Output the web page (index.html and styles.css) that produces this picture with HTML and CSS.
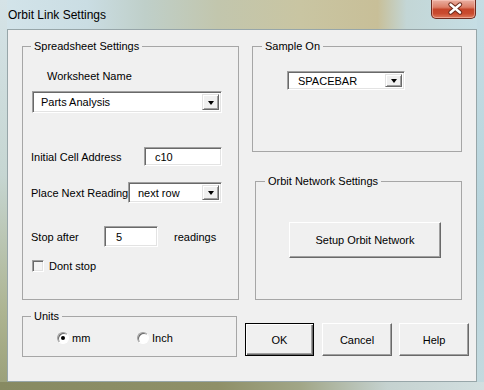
FILE: index.html
```html
<!DOCTYPE html>
<html lang="en">
  <head>
    <meta charset="UTF-8" />
    <title>Orbit Link Settings</title>
    <link rel="stylesheet" href="styles.css">
  </head>
  <body>
    <div class="window">
      <div class="titlebar">
        <span class="title">Orbit Link Settings</span>
        <button class="close" title="Close">
          <svg width="45" height="19" viewBox="0 0 45 19">
            <path d="M19.5 5.5 L29 13.5 M29 5.5 L19.5 13.5" stroke="#6b2a1c" stroke-width="4.4" stroke-linecap="round" fill="none" />
            <path d="M19.5 5.5 L29 13.5 M29 5.5 L19.5 13.5" stroke="#fff" stroke-width="2.4" stroke-linecap="round" fill="none" />
          </svg>
        </button>
      </div>

      <div class="client">
        <div class="col-left">
          <fieldset class="group sheet">
            <legend>Spreadsheet Settings</legend>
            <div class="caption">Worksheet Name</div>
            <div class="combo combo-sheet">
              <span class="combo-text">Parts Analysis</span>
              <span class="drop"><i></i></span>
            </div>

            <div class="field field-cell">
              <label class="lbl lbl-cell">Initial Cell Address</label>
              <div class="textbox tb-cell">c10</div>
            </div>

            <div class="field field-place">
              <label class="lbl lbl-place">Place Next Reading</label>
              <div class="combo combo-place">
                <span class="combo-text">next row</span>
                <span class="drop"><i></i></span>
              </div>
            </div>

            <div class="field field-stop">
              <label class="lbl lbl-stop">Stop after</label>
              <div class="textbox tb-stop">5</div>
              <span class="suffix">readings</span>
            </div>

            <div class="check-row">
              <span class="checkbox"></span>
              <span>Dont stop</span>
            </div>
          </fieldset>

          <fieldset class="group units">
            <legend>Units</legend>
            <div class="radio-row">
              <span class="option option-mm"><span class="radio checked"></span>mm</span>
              <span class="option"><span class="radio"></span>Inch</span>
            </div>
          </fieldset>
        </div>

        <div class="col-right">
          <fieldset class="group sample">
            <legend>Sample On</legend>
            <div class="combo combo-sample">
              <span class="combo-text">SPACEBAR</span>
              <span class="drop"><i></i></span>
            </div>
          </fieldset>

          <fieldset class="group network">
            <legend>Orbit Network Settings</legend>
            <button class="btn btn-setup">Setup Orbit Network</button>
          </fieldset>

          <div class="actions">
            <button class="btn btn-default">OK</button>
            <button class="btn">Cancel</button>
            <button class="btn">Help</button>
          </div>
        </div>
      </div>

      <div class="frame-bottom"></div>
    </div>
  </body>
</html>
```

FILE: styles.css
```css
body {
  margin: 0;
  font-family: "Liberation Sans", Arial, sans-serif;
  font-size: 11px;
  color: #000;
  background: #fff;
}
.window {
  width: 484px;
  height: 390px;
  display: flex;
  flex-direction: column;
  background:
    linear-gradient(180deg, #d5e3e7 0%, #c6d6d2 45%, #adb491 80%, #9a9f78 100%) left top / 7px 100% no-repeat,
    linear-gradient(180deg, #c5dde4 0%, #b7d4dc 60%, #c4dadf 100%) right top / 7px 100% no-repeat,
    linear-gradient(90deg, #d3e4ea 0%, #cadde3 18%, #bfcfc9 30%, #c2c6ad 45%, #c9c5a2 62%, #c8bf98 78%, #c3d6d6 84%, #c6dfe6 100%);
}
.titlebar {
  height: 29px;
  display: flex;
  align-items: flex-start;
}
.title {
  padding-left: 8px;
  line-height: 30px;
  font-size: 12px;
  color: #000;
}
.close {
  margin-left: auto;
  margin-right: 8px;
  width: 45px;
  height: 19px;
  padding: 0;
  border: 1px solid #6f2c20;
  border-top: none;
  border-radius: 0 0 5px 5px;
  background: linear-gradient(180deg, #eab0a2 0%, #dc7f68 40%, #c5452a 52%, #c94b2f 75%, #dd7a5c 100%);
  box-shadow: inset 0 0 0 1px rgba(255, 210, 200, 0.5);
}
.close svg {
  display: block;
  margin: -1px 0 0 -1px;
}
.client {
  margin: 0 7px;
  height: 353px;
  box-sizing: border-box;
  border: 1px solid #97a6a9;
  background: #f0f0f0;
  display: flex;
  padding: 9px 0 0 14px;
}
.frame-bottom {
  height: 8px;
  background: linear-gradient(90deg, #878a62 0%, #8f9068 45%, #a1a687 62%, #c5d2d0 80%, #d2dfe0 100%);
}

/* group boxes */
.group {
  margin: 0;
  padding: 0;
  box-sizing: border-box;
  border: 1px solid #a6a6a6;
  min-width: 0;
}
.group legend {
  padding: 0 3px;
  margin-left: 8px;
  line-height: 14px;
  height: 14px;
}
.col-left {
  width: 217px;
}
.col-right {
  margin-left: 6px;
  width: 224px;
}
.sheet {
  width: 217px;
  height: 261px;
}
.units {
  margin-top: 9px;
  width: 215px;
  height: 48px;
}
.sample {
  margin-left: 7px;
  width: 210px;
  height: 113px;
}
.sample legend,
.network legend {
  margin-left: 9px;
}
.network {
  margin: 22px 0 0 10px;
  width: 207px;
  height: 126px;
}

/* spreadsheet rows */
.caption {
  margin: 16px 0 0 24px;
  height: 14px;
  line-height: 14px;
}
.field {
  display: flex;
  align-items: center;
  margin-left: 8px;
}
.field-cell {
  margin-top: 34px;
  height: 19px;
}
.field-place {
  margin-top: 16px;
  height: 21px;
}
.field-stop {
  margin-top: 23px;
  height: 21px;
}
.lbl {
  white-space: nowrap;
  flex-shrink: 0;
}
.lbl-cell {
  width: 113px;
}
.lbl-place {
  width: 97px;
}
.lbl-stop {
  width: 73px;
}
.suffix {
  margin-left: 16px;
}
.textbox,
.combo {
  box-sizing: border-box;
  flex-shrink: 0;
  height: 100%;
  background: #fff;
  border-top: 1px solid #a0a0a0;
  border-left: 1px solid #a0a0a0;
  border-right: 1px solid #fff;
  border-bottom: 1px solid #fff;
  box-shadow: inset 1px 1px 0 #696969, inset -1px -1px 0 #e3e3e3;
  display: flex;
  align-items: center;
}
.textbox {
  padding-left: 10px;
}
.tb-cell {
  width: 78px;
}
.tb-stop {
  width: 54px;
  padding-left: 11px;
}
.combo-text {
  flex: 1;
  padding-left: 8px;
  white-space: nowrap;
}
.drop {
  width: 17px;
  height: calc(100% - 4px);
  margin-right: 2px;
  box-sizing: border-box;
  background: #f0f0f0;
  border-top: 1px solid #e3e3e3;
  border-left: 1px solid #e3e3e3;
  border-right: 1px solid #696969;
  border-bottom: 1px solid #696969;
  box-shadow: inset 1px 1px 0 #fff, inset -1px -1px 0 #a0a0a0;
  display: flex;
  align-items: center;
  justify-content: center;
}
.drop i {
  width: 0;
  height: 0;
  border-top: 4px solid #000;
  border-left: 3.5px solid transparent;
  border-right: 3.5px solid transparent;
  margin-top: 1px;
}
.combo-sheet {
  margin: 8px 0 0 9px;
  width: 190px;
  height: 22px;
}
.combo-place {
  width: 94px;
}
.combo-place .combo-text {
  padding-left: 9px;
}
.combo-sample {
  margin: 18px 0 0 34px;
  width: 118px;
  height: 19px;
}
.combo-sample .combo-text {
  padding-left: 10px;
}
.check-row {
  margin: 12px 0 0 9px;
  height: 13px;
  display: flex;
  align-items: center;
  gap: 5px;
}
.checkbox {
  width: 12px;
  height: 12px;
  box-sizing: border-box;
  background: #f4f4f4;
  border-top: 1px solid #a0a0a0;
  border-left: 1px solid #a0a0a0;
  border-right: 1px solid #fff;
  border-bottom: 1px solid #fff;
  box-shadow: inset 1px 1px 0 #696969, inset -1px -1px 0 #e3e3e3;
}

/* units */
.radio-row {
  margin: 8px 0 0 34px;
  height: 13px;
  display: flex;
  align-items: center;
}
.option {
  display: flex;
  align-items: center;
  gap: 3px;
}
.option-mm {
  width: 80px;
}
.radio {
  width: 12px;
  height: 12px;
  box-sizing: border-box;
  border-radius: 50%;
  background: #fff;
  border: 1px solid;
  border-color: #a0a0a0 #fff #fff #a0a0a0;
  box-shadow: inset 1px 1px 0 #696969;
  position: relative;
}
.radio.checked::after {
  content: "";
  position: absolute;
  left: 3px;
  top: 3px;
  width: 4px;
  height: 4px;
  border-radius: 50%;
  background: #000;
}

/* buttons */
.btn {
  font-family: "Liberation Sans", Arial, sans-serif;
  font-size: 11px;
  color: #000;
  background: #f0f0f0;
  box-sizing: border-box;
  padding: 0;
  border-top: 1px solid #fff;
  border-left: 1px solid #fff;
  border-right: 1px solid #696969;
  border-bottom: 1px solid #696969;
  box-shadow: inset -1px -1px 0 #a0a0a0;
}
.btn-setup {
  display: block;
  margin: 34px 0 0 33px;
  width: 152px;
  height: 36px;
}
.actions {
  margin-top: 23px;
  display: flex;
}
.actions .btn {
  width: 71px;
  height: 33px;
}
.actions .btn + .btn {
  margin-left: 7px;
}
.actions .btn-default {
  width: 70px;
  margin-right: 1px;
  border: 1px solid #000;
  box-shadow: inset 1px 1px 0 #fff, inset -1px -1px 0 #696969, inset -2px -2px 0 #a0a0a0;
}
```
